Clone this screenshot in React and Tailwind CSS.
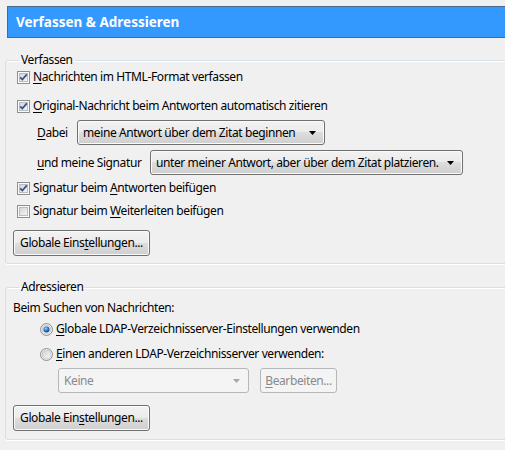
import React from "react";

const font = { fontFamily: '"Noto Sans", "Open Sans", sans-serif' };

function U({ children }) {
  return <span className="underline underline-offset-[2px] decoration-[1px]">{children}</span>;
}

function CheckBox({ checked }) {
  return (
    <svg width="13" height="13" viewBox="0 0 13 13" className="shrink-0">
      <defs>
        <linearGradient id="cbg" x1="0" y1="0" x2="1" y2="1">
          <stop offset="0" stopColor="#cfd3d8" />
          <stop offset="1" stopColor="#f7f7f7" />
        </linearGradient>
      </defs>
      <rect x="0.5" y="0.5" width="12" height="12" fill="#fbfbfb" stroke="#8e8f8f" />
      <rect x="2.5" y="2.5" width="8" height="8" fill="url(#cbg)" stroke="#b8bdc2" />
      {checked && (
        <path d="M3.2 6.3 L5.4 8.6 L9.8 3.4" fill="none" stroke="#3b4f86" strokeWidth="1.7" />
      )}
    </svg>
  );
}

function Radio({ checked }) {
  return (
    <svg width="13" height="13" viewBox="0 0 13 13" className="shrink-0">
      <defs>
        <linearGradient id="rbg" x1="0" y1="0" x2="1" y2="1">
          <stop offset="0" stopColor="#cdd1d6" />
          <stop offset="1" stopColor="#f8f8f8" />
        </linearGradient>
        <radialGradient id="rdot" cx="0.4" cy="0.35" r="0.7">
          <stop offset="0" stopColor="#a9d6ff" />
          <stop offset="0.5" stopColor="#2b78c8" />
          <stop offset="1" stopColor="#103e7a" />
        </radialGradient>
      </defs>
      <circle cx="6.5" cy="6.5" r="6" fill="#f4f4f4" stroke="#8e8f8f" />
      <circle cx="6.5" cy="6.5" r="4.5" fill="url(#rbg)" stroke="#c4c8cc" />
      {checked && <circle cx="6.5" cy="6.5" r="3" fill="url(#rdot)" />}
    </svg>
  );
}

function CheckRow({ checked, children, className = "" }) {
  return (
    <div className={`flex items-center h-[16px] ml-[4px] gap-[2px] ${className}`}>
      <CheckBox checked={checked} />
      <span className="pl-[1px]">{children}</span>
    </div>
  );
}

function RadioRow({ checked, children, className = "" }) {
  return (
    <div className={`flex items-center h-[16px] ml-[27px] gap-[2px] ${className}`}>
      <Radio checked={checked} />
      <span className="pl-[1px]">{children}</span>
    </div>
  );
}

function Arrow({ color }) {
  return (
    <svg width="7" height="4" viewBox="0 0 7 4" className="shrink-0">
      <path d="M0 0 H7 L3.5 4 Z" fill={color} />
    </svg>
  );
}

const btnBg =
  "bg-[linear-gradient(180deg,#f2f2f2_0%,#ebebeb_50%,#dddddd_50%,#cfcfcf_100%)] shadow-[inset_0_0_0_1px_#fbfbfb]";

function Select({ width, children, disabled }) {
  return (
    <div
      className={`flex items-center justify-between h-[25px] rounded-[3px] border pl-[5px] pr-[8px] ${
        disabled ? "border-[#b4b8bb] bg-[#f4f4f4] text-[#8a8a8a]" : `border-[#707070] ${btnBg}`
      } ${width}`}
    >
      <span className="whitespace-nowrap">{children}</span>
      <Arrow color={disabled ? "#a6a6a6" : "#000"} />
    </div>
  );
}

function Button({ children, width, disabled }) {
  return (
    <div
      className={`flex items-center justify-center rounded-[3px] border whitespace-nowrap ${
        disabled ? "border-[#b4b8bb] bg-[#f4f4f4] text-[#8a8a8a] h-[25px]" : `border-[#707070] h-[26px] ${btnBg}`
      } ${width}`}
    >
      {children}
    </div>
  );
}

function Group({ label, children, className = "" }) {
  return (
    <fieldset
      className={`ml-[5px] w-[520px] border border-[#d5dfe5] rounded-[3px] pl-[7px] shadow-[0_1px_0_#ffffff,inset_0_1px_0_#ffffff] ${className}`}
    >
      <legend className="ml-[6px] px-[2px] leading-[16px]">{label}</legend>
      {children}
    </fieldset>
  );
}

export default function App() {
  return (
    <div
      className="w-[505px] h-[450px] bg-[#f0f0f0] overflow-hidden pt-[6px] text-[12px] leading-[16px] tracking-[-0.4px] text-black"
      style={font}
    >
      <div className="ml-[7px] w-[520px] h-[32px] bg-[#3399ff] border border-[#4a6a8c] flex items-center pl-[8px]">
        <span className="text-white font-bold text-[13.5px] leading-[18px] tracking-[0px]">
          Verfassen &amp; Adressieren
        </span>
      </div>

      <Group label="Verfassen" className="mt-[14px] pb-[7px]">
        <CheckRow checked className="mt-[1px]">
          <U>N</U>achrichten im HTML-Format verfassen
        </CheckRow>
        <CheckRow checked className="mt-[13px]">
          <U>O</U>riginal-Nachricht beim Antworten automatisch zitieren
        </CheckRow>
        <div className="flex items-center ml-[24px] mt-[6px]">
          <span className="w-[40px]">
            <U>D</U>abei
          </span>
          <Select width="w-[248px]">meine Antwort über dem Zitat beginnen</Select>
        </div>
        <div className="flex items-center ml-[24px] mt-[5px]">
          <span className="w-[113px]">
            <U>u</U>nd meine Signatur
          </span>
          <Select width="w-[313px]">unter meiner Antwort, aber über dem Zitat platzieren.</Select>
        </div>
        <CheckRow checked className="mt-[5px]">
          Signatur beim <U>A</U>ntworten beifügen
        </CheckRow>
        <CheckRow className="mt-[7px]">
          Signatur beim <U>W</U>eiterleiten beifügen
        </CheckRow>
        <div className="mt-[11px] flex">
          <Button width="w-[137px]">
            Globale Eins<U>t</U>ellungen...
          </Button>
        </div>
      </Group>

      <Group label="Adressieren" className="mt-[15px] pb-[8px]">
        <div className="h-[16px] mt-[5px]">Beim Suchen von Nachrichten:</div>
        <RadioRow checked className="mt-[5px]">
          <U>G</U>lobale LDAP-Verzeichnisserver-Einstellungen verwenden
        </RadioRow>
        <RadioRow className="mt-[9px]">
          <U>E</U>inen anderen LDAP-Verzeichnisserver verwenden:
        </RadioRow>
        <div className="flex items-center ml-[45px] mt-[6px] gap-[11px]">
          <Select width="w-[191px]" disabled>
            Keine
          </Select>
          <Button width="w-[77px]" disabled>
            <U>B</U>earbeiten...
          </Button>
        </div>
        <div className="mt-[12px] flex">
          <Button width="w-[137px]">
            Globale Ein<U>s</U>tellungen...
          </Button>
        </div>
      </Group>
    </div>
  );
}
